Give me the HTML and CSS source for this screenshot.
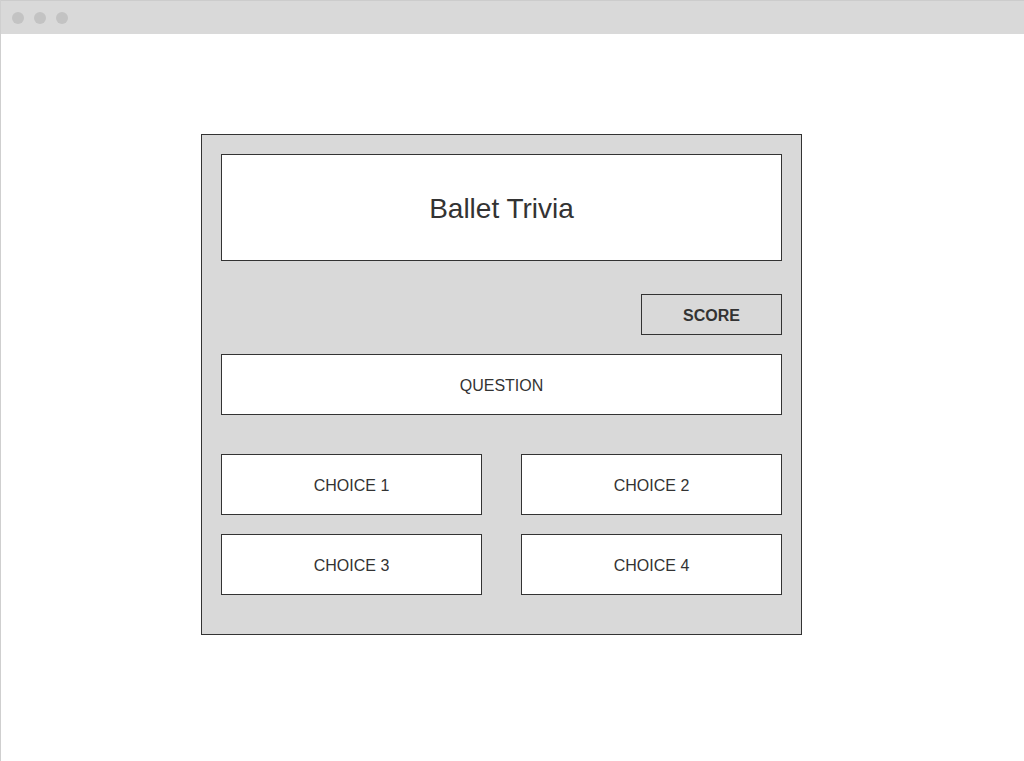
FILE: index.html
```html
<!DOCTYPE html>
<html>
<head>
<meta charset="utf-8">
<link rel="stylesheet" href="styles.css">
</head>
<body>
<div class="window">
  <div class="titlebar">
    <span class="dot"></span><span class="dot"></span><span class="dot"></span>
  </div>
  <div class="page">
    <div class="panel">
      <div class="title">Ballet Trivia</div>
      <div class="score-row"><div class="score">SCORE</div></div>
      <div class="question">QUESTION</div>
      <div class="choices">
        <div class="choice">CHOICE 1</div>
        <div class="choice">CHOICE 2</div>
        <div class="choice">CHOICE 3</div>
        <div class="choice">CHOICE 4</div>
      </div>
    </div>
  </div>
</div>
</body>
</html>
```

FILE: styles.css
```css
* { box-sizing: border-box; }
html, body { margin: 0; padding: 0; background: #fff; }
body { font-family: "Liberation Sans", Arial, sans-serif; color: #333; }
.window {
  width: 1024px;
  height: 761px;
  border-left: 1px solid #cfcfcf;
  overflow: hidden;
}
.titlebar {
  height: 34px;
  background: #d9d9d9;
  border-top: 1px solid #cccccc;
  display: flex;
  align-items: center;
  gap: 10px;
  padding-left: 11px;
}
.dot {
  width: 12px;
  height: 12px;
  border-radius: 50%;
  background: #c3c3c3;
}
.page { padding-top: 100px; padding-left: 200px; }
.panel {
  width: 601px;
  height: 501px;
  background: #d9d9d9;
  border: 1px solid #333;
  padding: 19px;
  display: flex;
  flex-direction: column;
}
.title {
  height: 107px;
  background: #fff;
  border: 1px solid #333;
  display: flex;
  align-items: center;
  justify-content: center;
  padding-top: 3px;
  font-size: 28px;
}
.score-row { display: flex; justify-content: flex-end; margin-top: 33px; }
.score {
  width: 141px;
  height: 41px;
  border: 1px solid #333;
  display: flex;
  align-items: center;
  justify-content: center;
  padding-top: 2px;
  font-weight: bold;
  font-size: 16px;
}
.question, .choice {
  height: 61px;
  background: #fff;
  border: 1px solid #333;
  display: flex;
  align-items: center;
  justify-content: center;
  padding-top: 2px;
  font-size: 16px;
}
.question { margin-top: 19px; }
.choices {
  margin-top: 39px;
  display: grid;
  grid-template-columns: 261px 261px;
  column-gap: 39px;
  row-gap: 19px;
}
```
